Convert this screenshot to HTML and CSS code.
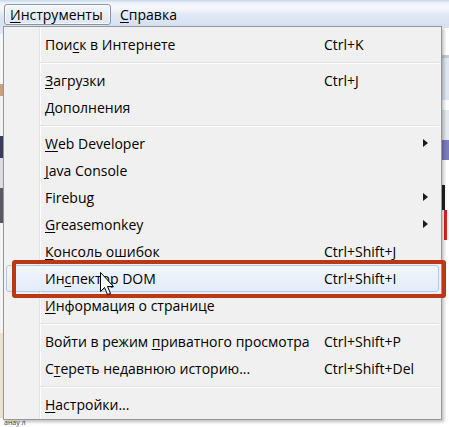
FILE: index.html
```html
<!DOCTYPE html>
<html lang="ru">
<head>
<meta charset="utf-8">
<link rel="stylesheet" href="styles.css">
</head>
<body>
<div class="window">
  <div class="menubar">
    <span class="mb-item active"><u>И</u>нструменты</span>
    <span class="mb-item"><u>С</u>правка</span>
  </div>
  <div class="page">
    <div class="left-strip">
      <div class="ls a"></div><div class="ls b"></div><div class="ls c"></div><div class="ls d"></div><div class="ls e"></div><div class="ls f"></div><div class="ls g"></div><div class="ls h"></div><div class="ls i"></div>
    </div>
    <div class="right-strip">
      <div class="rs r1"></div><div class="rs r2"></div><div class="rs r3"></div><div class="rs r4"></div><div class="rs r5"></div><div class="rs r6"></div><div class="rs r7"></div><div class="rs r8"></div><div class="rs r9"></div><div class="rs r10"></div><div class="rs r11"></div>
    </div>
  </div>
  <div class="foot-text">анау л</div>

  <div class="menu">
    <div class="item"><span class="label">Пои<u>с</u>к в Интернете</span><span class="key">Ctrl+K</span></div>
    <div class="sep"></div>
    <div class="item"><span class="label"><u>З</u>агрузки</span><span class="key">Ctrl+J</span></div>
    <div class="item"><span class="label"><u>Д</u>ополнения</span><span class="key"></span></div>
    <div class="sep"></div>
    <div class="item sub"><span class="label"><u>W</u>eb Developer</span><span class="key"></span><span class="arrow"></span></div>
    <div class="item"><span class="label"><u>J</u>ava Console</span><span class="key"></span></div>
    <div class="item sub"><span class="label">Firebug</span><span class="key"></span><span class="arrow"></span></div>
    <div class="item sub"><span class="label"><u>G</u>reasemonkey</span><span class="key"></span><span class="arrow"></span></div>
    <div class="item"><span class="label"><u>К</u>онсоль ошибок</span><span class="key">Ctrl+Shift+J</span></div>
    <div class="item hot"><span class="label">Ин<u>с</u>пектор DOM</span><span class="key">Ctrl+Shift+I</span></div>
    <div class="item"><span class="label"><u>И</u>нформация о странице</span><span class="key"></span></div>
    <div class="sep"></div>
    <div class="item"><span class="label">Войти в режим <u>п</u>риватного просмотра</span><span class="key">Ctrl+Shift+P</span></div>
    <div class="item"><span class="label">С<u>т</u>ереть недавнюю историю...</span><span class="key">Ctrl+Shift+Del</span></div>
    <div class="sep"></div>
    <div class="item"><span class="label"><u>Н</u>астройки...</span><span class="key"></span></div>
  </div>

  <div class="callout"></div>

  <svg class="cursor" width="18" height="26" viewBox="0 0 18 26">
    <path d="M2.5 3.5 L2.5 21.5 L6.5 17.5 L9.5 24.5 L12.5 23.5 L9.5 16.5 L15.5 16.5 Z" fill="rgba(0,0,0,0.18)" stroke="none"/>
    <path d="M1.5 1.5 L1.5 20.5 L5.5 16.5 L8.5 23.5 L11.5 22.5 L8.5 15.5 L14.5 15.5 Z" fill="#fff" stroke="#000" stroke-width="1" stroke-linejoin="miter"/>
  </svg>
</div>
</body>
</html>
```

FILE: styles.css
```css
* { box-sizing: border-box; }
html, body { margin: 0; padding: 0; }
body {
  width: 449px;
  height: 427px;
  overflow: hidden;
  background: #fff;
  font-family: "Open Sans", "Noto Sans", sans-serif;
  font-size: 14px;
  color: #000;
}
u { text-decoration: underline; text-underline-offset: 2px; text-decoration-thickness: 1px; }

.window { position: relative; width: 449px; height: 427px; }

.menubar {
  height: 26px;
  display: flex;
  align-items: center;
  gap: 4px;
  padding: 0 0 0 4px;
  background: linear-gradient(#c8d6ec 0, #eef3fa 3px, #f6f8fc 8px, #e2e9f5 14px, #d6e0f1 26px);
}
.mb-item {
  height: 21px;
  display: flex;
  align-items: center;
  padding: 0 5px;
  margin-top: 3px;
  line-height: 1;
}
.mb-item.active {
  width: 107px;
  border: 1px solid #8a96a8;
  border-radius: 3px;
  background: linear-gradient(#f3f6fb, #dfe6f1);
  box-shadow: inset 0 0 0 1px rgba(255,255,255,0.7);
}

.page {
  height: 392px;
  display: flex;
  justify-content: space-between;
}
.left-strip { width: 3px; display: flex; flex-direction: column; }
.ls.a { height: 8px; background: #dfe6f1; }
.ls.b { height: 50px; background: #f6f7f9; }
.ls.c { height: 12px; background: #c9a27a; }
.ls.d { height: 40px; background: #f2f3f5; }
.ls.e { height: 22px; background: #3b3b5c; }
.ls.f { height: 30px; background: #dcdde2; }
.ls.g { height: 35px; background: #5a5a62; }
.ls.h { height: 110px; background: #f4f4f4; }
.ls.i { height: 85px; background: #e8e2cf; }

.right-strip { width: 7px; display: flex; flex-direction: column; }
.rs.r1 { height: 2px; background: #dfe4ee; }
.rs.r2 { height: 27px; background: #ffffff; }
.rs.r3 { height: 3px; background: #c8cbd2; }
.rs.r4 { height: 42px; background: #dfe6f1; }
.rs.r5 { height: 10px; background: #ffffff; }
.rs.r6 { height: 30px; background: #e4e8f0; }
.rs.r7 { height: 20px; background: #7b7bbd; }
.rs.r8 { height: 25px; background: #ffffff; }
.rs.r9 { height: 25px; background: linear-gradient(to right, #222 0, #222 3px, #fff 3px); }
.rs.r10 { height: 30px; background: linear-gradient(to right, #fff 0, #fff 2px, #e02020 2px, #e02020 5px, #fff 5px); }
.rs.r11 { height: 178px; background: #ffffff; }

.foot-text {
  height: 9px;
  padding-left: 4px;
  font-size: 7px;
  line-height: 9px;
  color: #444;
}

.menu {
  position: absolute;
  left: 3px;
  top: 26px;
  width: 439px;
  border: 1px solid #979797;
  padding: 4px 2px 1px;
  background: linear-gradient(to right, #f1f1f1 0, #f1f1f1 35px, #e2e3e3 35px, #e2e3e3 36px, #ffffff 36px, #ffffff 37px, #f0f0f0 37px);
  box-shadow: 2px 2px 3px rgba(0,0,0,0.25);
}
.item {
  position: relative;
  height: 27px;
  display: grid;
  grid-template-columns: 279px 1fr;
  align-items: center;
  padding-left: 38px;
  border: 1px solid transparent;
  border-radius: 3px;
  white-space: nowrap;
}
.item.hot {
  border-color: #aecbea;
  background: linear-gradient(#f1f6fd, #e2ecf9);
}
.arrow {
  position: absolute;
  right: 10px;
  top: 8px;
  width: 0;
  height: 0;
  border-left: 5px solid #1a1a1a;
  border-top: 4.5px solid transparent;
  border-bottom: 4.5px solid transparent;
}
.sep {
  height: 9px;
  margin-left: 34px;
  background: linear-gradient(transparent 0, transparent 4px, #e0e0e0 4px, #e0e0e0 5px, #ffffff 5px, #ffffff 6px, transparent 6px);
}

.callout {
  position: absolute;
  left: 12px;
  top: 260px;
  width: 434px;
  height: 38px;
  border: 4px solid #bb3815;
  border-radius: 3px;
}
.cursor {
  position: absolute;
  left: 99px;
  top: 271px;
}
```
